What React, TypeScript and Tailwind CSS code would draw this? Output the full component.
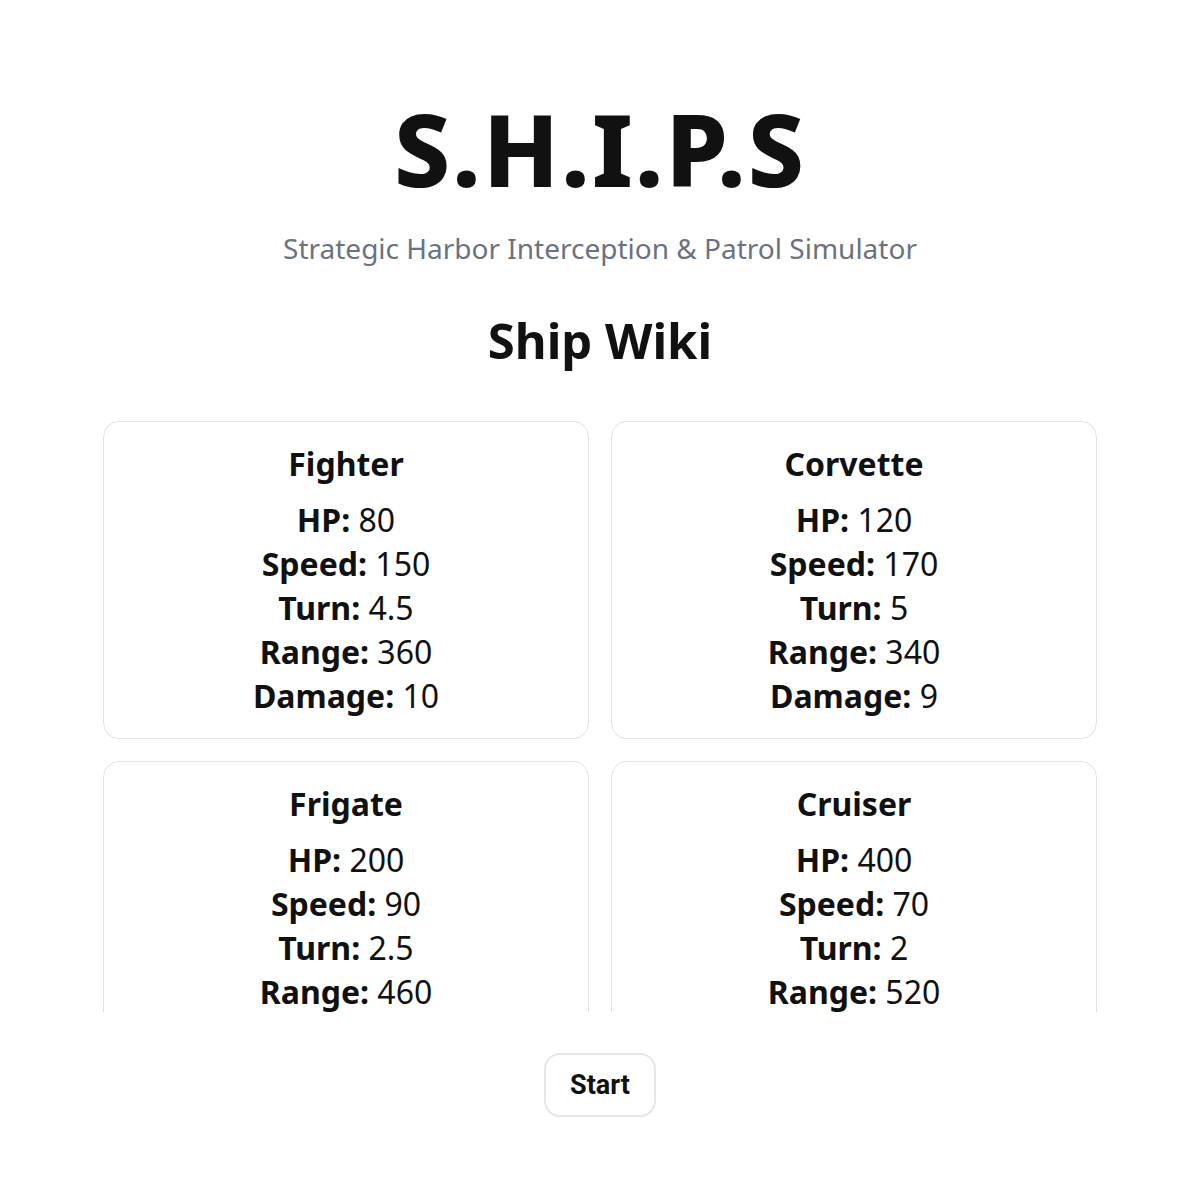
import React from 'react'

type Ship = {
  name: string
  hp: number
  speed: number
  turn: number
  range: number
  damage: number
}

const ships: Ship[] = [
  { name: 'Fighter', hp: 80, speed: 150, turn: 4.5, range: 360, damage: 10 },
  { name: 'Corvette', hp: 120, speed: 170, turn: 5, range: 340, damage: 9 },
  { name: 'Frigate', hp: 200, speed: 90, turn: 2.5, range: 460, damage: 18 },
  { name: 'Cruiser', hp: 400, speed: 70, turn: 2, range: 520, damage: 30 },
]

const Stat = ({ label, value }: { label: string; value: number }) => (
  <div>
    <span className="font-bold">{label}:</span> {value}
  </div>
)

const ShipCard = ({ ship }: { ship: Ship }) => (
  <div className="rounded-2xl border border-[#e2e2e2] bg-white p-5 text-center text-[32px] leading-[44px] text-[#111]">
    <h3 className="mb-3 font-bold">{ship.name}</h3>
    <Stat label="HP" value={ship.hp} />
    <Stat label="Speed" value={ship.speed} />
    <Stat label="Turn" value={ship.turn} />
    <Stat label="Range" value={ship.range} />
    <Stat label="Damage" value={ship.damage} />
  </div>
)

export default function App() {
  return (
    <div
      className="flex min-h-[1200px] flex-col items-center bg-white pt-[73px] text-[#111]"
      style={{ fontFamily: '"Noto Sans", sans-serif' }}
    >
      {/* Header */}
      <h1 className="text-[100px] font-extrabold leading-[150px] tracking-[0.02em]">S.H.I.P.S</h1>
      <p className="mt-1 text-[28px] leading-[42px] text-[#6b7280]">
        Strategic Harbor Interception &amp; Patrol Simulator
      </p>

      <h2 className="mt-[35px] text-[49px] font-bold leading-[73px]">Ship Wiki</h2>

      {/* Wiki list */}
      <div className="mt-6 h-[611px] w-[994px] overflow-hidden pt-5">
        <div className="grid grid-cols-2 gap-[22px]">
          {ships.map((s) => (
            <ShipCard key={s.name} ship={s} />
          ))}
        </div>
      </div>

      <button
        className="mt-[41px] rounded-2xl border-2 border-[#e6e6e6] bg-white px-6 py-4 text-[27px] font-bold leading-[28px] text-[#111]"
        style={{ fontFamily: 'Roboto, sans-serif' }}
      >
        Start
      </button>
    </div>
  )
}
